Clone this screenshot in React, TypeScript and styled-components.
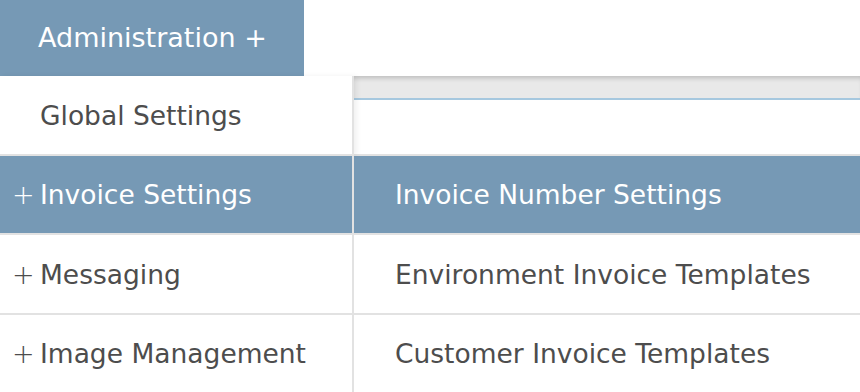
import React from "react";
import styled, { createGlobalStyle } from "styled-components";

const Global = createGlobalStyle`
  html, body { margin: 0; padding: 0; background: #fff; }
  body { font-family: "DejaVu Sans", "Liberation Sans", sans-serif; overflow: hidden; }
`;

const BLUE = "#7699b5";
const LINE = "#e2e2e2";
const FS = "26.5px";

const Page = styled.div`
  width: 860px;
  height: 392px;
  display: flex;
  flex-direction: column;
`;

const TopBar = styled.div`
  height: 76px;
  display: flex;
`;

const AdminButton = styled.div`
  width: 304px;
  background: ${BLUE};
  color: #fff;
  font-size: 27px;
  display: flex;
  align-items: center;
  padding-left: 38px;
  padding-bottom: 2px;
  box-sizing: border-box;
  white-space: nowrap;
`;

const Grid = styled.div`
  flex: 1;
  display: grid;
  grid-template-columns: 354px 1fr;
  grid-template-rows: 80px 79px 80px 1fr;
`;

const LeftCell = styled.div<{ $active?: boolean; $first?: boolean; $last?: boolean }>`
  position: relative;
  z-index: 1;
  border-right: 2px solid ${LINE};
  border-bottom: ${(p) => (p.$last ? "none" : `2px solid ${LINE}`)};
  background: ${(p) => (p.$active ? BLUE : "#fff")};
  color: ${(p) => (p.$active ? "#fff" : "#4d4d4d")};
  font-size: ${FS};
  display: flex;
  align-items: center;
  padding-left: 40px;
  white-space: nowrap;
  box-shadow: ${(p) => (p.$first ? "3px 0 5px rgba(0,0,0,0.06)" : "none")};
`;

const Plus = styled.span`
  position: absolute;
  left: 12px;
  font-size: 27px;
  font-weight: 300;
`;

const RightCell = styled.div<{ $active?: boolean; $last?: boolean }>`
  border-bottom: ${(p) => (p.$last ? "none" : `2px solid ${LINE}`)};
  background: ${(p) => (p.$active ? BLUE : "#fff")};
  color: ${(p) => (p.$active ? "#fff" : "#4d4d4d")};
  font-size: ${FS};
  display: flex;
  align-items: center;
  padding-left: 41px;
  white-space: nowrap;
`;

const ContentTop = styled.div`
  display: flex;
  flex-direction: column;
  border-bottom: 2px solid ${LINE};
`;

const GrayStrip = styled.div`
  height: 22px;
  background: #e9e9e9;
  box-shadow: inset 0 5px 5px -3px rgba(0, 0, 0, 0.2);
  border-bottom: 2px solid #a6c8df;
`;

const items: { left: string; right: string; active?: boolean }[] = [
  { left: "Invoice Settings", right: "Invoice Number Settings", active: true },
  { left: "Messaging", right: "Environment Invoice Templates" },
  { left: "Image Management", right: "Customer Invoice Templates" },
];

export default function App() {
  return (
    <Page>
      <Global />
      <TopBar>
        <AdminButton>Administration +</AdminButton>
      </TopBar>
      <Grid>
        <LeftCell $first>Global Settings</LeftCell>
        <ContentTop>
          <GrayStrip />
        </ContentTop>
        {items.map((it, i) => (
          <React.Fragment key={it.left}>
            <LeftCell $active={it.active} $last={i === items.length - 1}>
              <Plus>+</Plus>
              {it.left}
            </LeftCell>
            <RightCell $active={it.active} $last={i === items.length - 1}>
              {it.right}
            </RightCell>
          </React.Fragment>
        ))}
      </Grid>
    </Page>
  );
}
